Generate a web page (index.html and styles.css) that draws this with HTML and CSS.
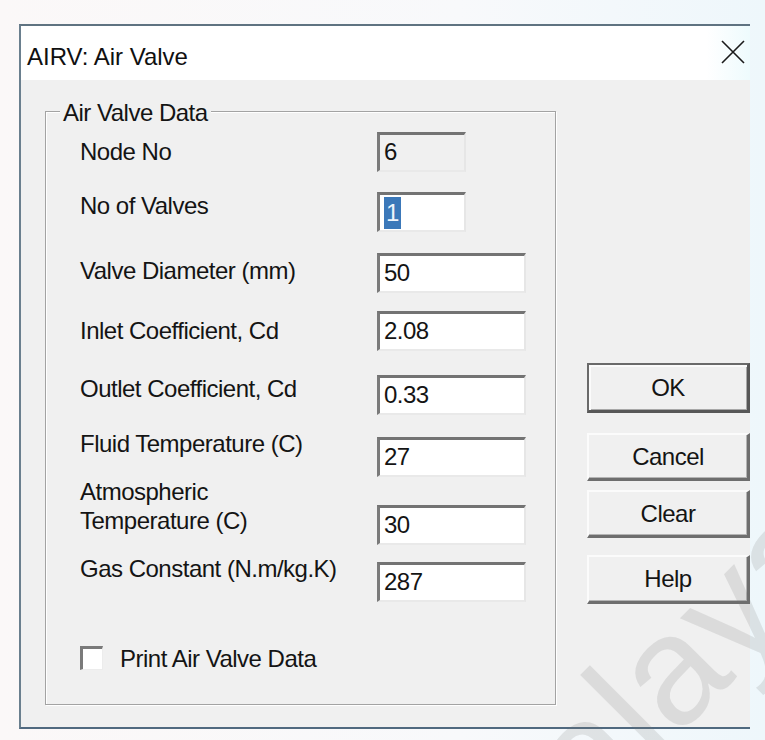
FILE: index.html
```html
<!DOCTYPE html>
<html>
<head>
<meta charset="utf-8">
<title>AIRV: Air Valve</title>
<link rel="stylesheet" href="styles.css">
</head>
<body>
<div class="screen">
  <div class="dialog">
    <div class="titlebar">
      <span class="title">AIRV: Air Valve</span>
      <svg class="close" width="24" height="24" viewBox="0 0 24 24">
        <path d="M1 1 L23 23 M23 1 L1 23" stroke="#1a1a1a" stroke-width="1.6" fill="none"/>
      </svg>
    </div>
    <div class="content">
      <div class="group">
        <span class="group-title">Air Valve Data</span>
        <div class="fields">
          <div class="row row-node">
            <span class="label">Node No</span>
            <div class="edit short disabled">6</div>
          </div>
          <div class="row row-valves">
            <span class="label">No of Valves</span>
            <div class="edit short"><span class="selected">1</span></div>
          </div>
          <div class="row row-diam">
            <span class="label">Valve Diameter (mm)</span>
            <div class="edit">50</div>
          </div>
          <div class="row row-inlet">
            <span class="label">Inlet Coefficient, Cd</span>
            <div class="edit">2.08</div>
          </div>
          <div class="row row-outlet">
            <span class="label">Outlet Coefficient, Cd</span>
            <div class="edit">0.33</div>
          </div>
          <div class="row row-fluid">
            <span class="label">Fluid Temperature (C)</span>
            <div class="edit">27</div>
          </div>
          <div class="row row-atmos">
            <span class="label two-line">Atmospheric<br>Temperature (C)</span>
            <div class="edit">30</div>
          </div>
          <div class="row row-gas">
            <span class="label">Gas Constant (N.m/kg.K)</span>
            <div class="edit">287</div>
          </div>
        </div>
        <div class="check">
          <span class="check-box"></span>
          <span class="check-label">Print Air Valve Data</span>
        </div>
      </div>
      <div class="buttons">
        <div class="btn btn-default btn-ok">OK</div>
        <div class="btn btn-cancel">Cancel</div>
        <div class="btn btn-clear">Clear</div>
        <div class="btn btn-help">Help</div>
      </div>
    </div>
  </div>
  <div class="watermark">Malayalam</div>
</div>
</body>
</html>
```

FILE: styles.css
```css
html, body {
  margin: 0;
  padding: 0;
}

body {
  width: 765px;
  height: 740px;
  overflow: hidden;
  background: linear-gradient(90deg, #fbf8f8 0%, #f8f9fb 60%, #eef7fb 100%);
  font-family: "Liberation Sans", Arial, sans-serif;
  color: #141414;
}

.screen {
  position: relative;
  width: 765px;
  height: 740px;
  overflow: hidden;
  padding-top: 24px;
  box-sizing: border-box;
}

/* dialog frame */
.dialog {
  margin-left: 19px;
  width: 731px;
  height: 705px;
  box-sizing: border-box;
  border-top: 2px solid #5f7381;
  border-left: 2px solid #6a7f8e;
  border-bottom: 2px solid #50697f;
  display: flex;
  flex-direction: column;
}

.titlebar {
  height: 54px;
  flex: none;
  background: linear-gradient(90deg, #ffffff 0%, #ffffff 94%, #eefbfd 100%);
  display: flex;
  align-items: flex-start;
  justify-content: space-between;
  padding: 17px 5px 0 6px;
  box-sizing: border-box;
}

.title {
  font-size: 24px;
  line-height: 28px;
  color: #101010;
}

.close {
  margin-top: -3px;
  display: block;
}

/* client area */
.content {
  flex: 1;
  background: #f0f0f0;
  display: flex;
  align-items: flex-start;
  padding: 31px 0 0 24px;
  font-size: 24px;
  line-height: 28px;
  letter-spacing: -0.5px;
}

/* etched group box */
.group {
  position: relative;
  width: 511px;
  height: 594px;
  box-sizing: border-box;
  border: 1px solid #a3a3a3;
  box-shadow: inset 1px 1px 0 #ffffff, 1px 1px 0 #ffffff;
  padding: 20px 0 0 34px;
}

.group-title {
  position: absolute;
  left: 14px;
  top: -13px;
  padding: 0 3px;
  background: #f0f0f0;
  color: #141414;
}

.fields {
  display: flex;
  flex-direction: column;
}

.row {
  display: flex;
  align-items: flex-start;
  height: 40px;
}

.label {
  width: 297px;
  flex: none;
  white-space: nowrap;
}

.two-line {
  line-height: 29px;
}

.row-valves { margin-top: 20px; }
.row-diam   { margin-top: 21px; }
.row-inlet  { margin-top: 18px; }
.row-outlet { margin-top: 24px; }
.row-fluid  { margin-top: 22px; }
.row-atmos  { margin-top: 28px; }
.row-gas    { margin-top: 17px; }

.row-node .label   { margin-top: 6px; }
.row-valves .label { margin-top: 0; }
.row-diam .label   { margin-top: 4px; }
.row-inlet .label  { margin-top: 6px; }
.row-outlet .label { margin-top: 0; }
.row-fluid .label  { margin-top: -7px; }
.row-atmos .label  { margin-top: -28px; }
.row-gas .label    { margin-top: -7px; }

/* sunken edit fields */
.edit {
  width: 149px;
  height: 40px;
  box-sizing: border-box;
  background: #ffffff;
  border-top: 3px solid #737373;
  border-left: 3px solid #7a7a7a;
  border-right: 2px solid #e6e6e6;
  border-bottom: 2px solid #e9e9e9;
  padding: 3px 0 0 4px;
  color: #141414;
}

.edit.short {
  width: 89px;
}

.edit.disabled {
  background: #f0f0f0;
}

.selected {
  display: inline-block;
  background: #3b78b9;
  color: #eef4fb;
  padding: 0 2px;
  height: 32px;
  line-height: 32px;
  margin-top: -1px;
}

/* checkbox */
.check {
  display: flex;
  align-items: center;
  margin-top: 41px;
  gap: 17px;
}

.check-box {
  width: 23px;
  height: 24px;
  box-sizing: border-box;
  background: #ffffff;
  border-top: 3px solid #7a7a7a;
  border-left: 3px solid #7a7a7a;
  border-right: 1px solid #ececec;
  border-bottom: 1px solid #ececec;
}

.check-label {
  margin-top: 2px;
}

/* push buttons */
.buttons {
  margin: 252px 0 0 31px;
  width: 163px;
  display: flex;
  flex-direction: column;
}

.btn {
  box-sizing: border-box;
  display: flex;
  align-items: center;
  justify-content: center;
  background: #f0f0f0;
  border-top: 2px solid #fbfbfb;
  border-left: 2px solid #fbfbfb;
  border-right: 3px solid #6e6e6e;
  border-bottom: 3px solid #6e6e6e;
  box-shadow: inset -1px -1px 0 #b4b4b4;
  color: #141414;
}

.btn-default {
  border-top: 2px solid #6a6a6a;
  border-left: 2px solid #6a6a6a;
  border-right: 3px solid #575757;
  border-bottom: 3px solid #575757;
  box-shadow: inset 2px 2px 0 #fbfbfb, inset -1px -1px 0 #a8a8a8;
}

.btn-ok     { height: 50px; }
.btn-cancel { height: 48px; margin-top: 20px; }
.btn-clear  { height: 48px; margin-top: 9px; }
.btn-help   { height: 49px; margin-top: 17px; }

/* faint diagonal watermark over the dialog */
.watermark {
  position: absolute;
  left: 500px;
  top: 783px;
  font-family: "Liberation Sans", Arial, sans-serif;
  font-size: 155px;
  line-height: 155px;
  color: rgba(120, 120, 120, 0.17);
  transform-origin: 0 131px;
  transform: rotate(-45deg);
  white-space: nowrap;
  pointer-events: none;
}
```
